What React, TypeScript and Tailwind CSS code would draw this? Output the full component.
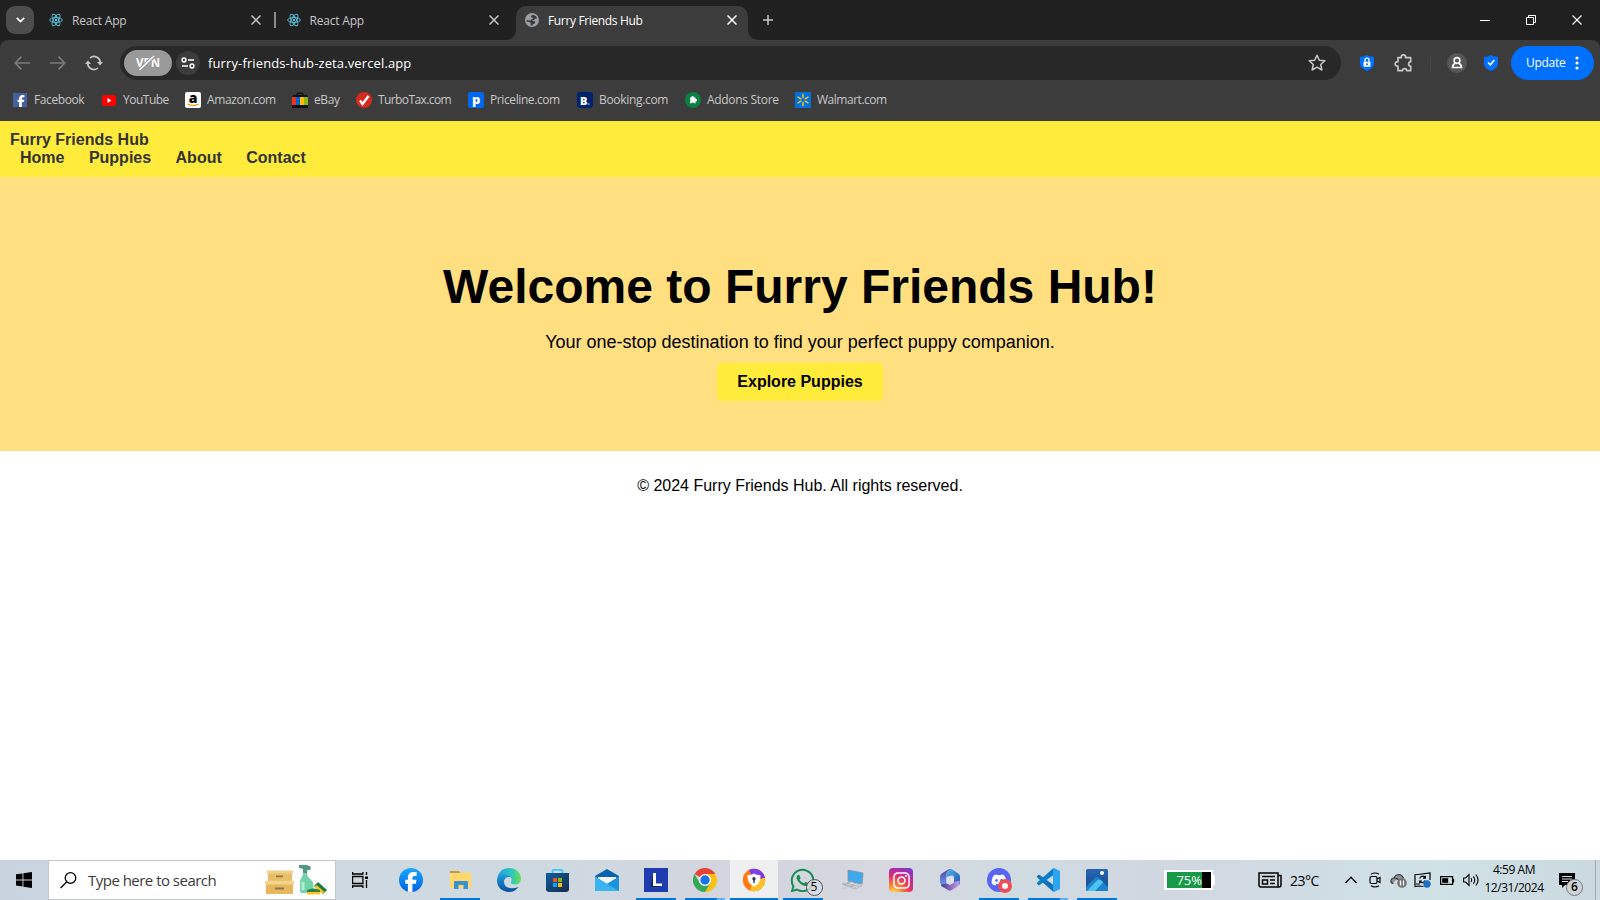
import React from "react";
import { FaDiscord, FaFacebookF, FaInstagram, FaWhatsapp } from "react-icons/fa6";

const ReactLogo = () => (
  <svg width="14" height="14" viewBox="0 0 14 14" fill="none" stroke="#58c4dc" strokeWidth="0.9">
    <circle cx="7" cy="7" r="1.2" fill="#58c4dc" stroke="none" />
    <ellipse cx="7" cy="7" rx="6.4" ry="2.5" />
    <ellipse cx="7" cy="7" rx="6.4" ry="2.5" transform="rotate(60 7 7)" />
    <ellipse cx="7" cy="7" rx="6.4" ry="2.5" transform="rotate(120 7 7)" />
  </svg>
);

const Cross = ({ color, size = 10, width = 1.5 }: { color: string; size?: number; width?: number }) => (
  <svg width={size} height={size} viewBox="0 0 10 10" stroke={color} strokeWidth={width}>
    <path d="M.5 .5 9.5 9.5M9.5 .5 .5 9.5" />
  </svg>
);

const Globe = () => (
  <svg width="14" height="14" viewBox="0 0 14 14">
    <circle cx="7" cy="7" r="7" fill="#9aa0a6" />
    <path d="M8.500 1.800 6.300 2.500 5.800 4l1.900.5.200 1.200-1.500.6L5.500 7.500l-4-.4.3 1.600 2.700.2 1.200 1-.1 2.400 1.700.1 1.100-1.500 1.300-.3.600-1.500-1.100-1-1.800-.1.300-.9 1.500-.2.800-1.200 2-.2-.8-2z" fill="#3c3c3c" />
  </svg>
);

function TabStrip() {
  return (
    <div className="flex h-10 items-center bg-[#202020] text-[12px] text-[#c7c7c7]">
      <div className="ml-1.5 flex h-7 w-7 items-center justify-center rounded-[9px] bg-[#4d4d4d]">
        <svg width="9" height="6" viewBox="0 0 9 6" fill="none" stroke="#fff" strokeWidth="1.8"><path d="M.8.9 4.5 4.600 8.200.9" /></svg>
      </div>
      <div className="flex w-[242px] items-center pl-[15px]">
        <ReactLogo />
        <span className="ml-[9px] w-[179px] pt-0.5 tracking-[-0.2px]">React App</span>
        <Cross color="#c7c7c7" />
      </div>
      <div className="-ml-0.5 h-4 w-[1.5px] bg-[#8a8a8a]" />
      <div className="flex w-[240px] items-center pl-[11px]">
        <ReactLogo />
        <span className="ml-[9px] w-[179px] pt-0.5 tracking-[-0.2px]">React App</span>
        <Cross color="#c7c7c7" />
      </div>
      <div className="-ml-[10px] flex h-full w-[252px] items-end">
        <svg className="shrink-0" width="10" height="10"><path d="M10 0v10H0A10 10 0 0 0 10 0z" fill="#3c3c3c" /></svg>
        <div className="flex h-[34px] w-[232px] items-center rounded-t-[10px] bg-[#3c3c3c] pb-[6px] pl-[9px] text-white">
          <Globe />
          <span className="ml-[9.500px] w-[178.500px] pt-0.5 tracking-[-0.35px]">Furry Friends Hub</span>
          <Cross color="#fff" />
        </div>
        <svg className="shrink-0" width="10" height="10"><path d="M0 0v10h10A10 10 0 0 1 0 0z" fill="#3c3c3c" /></svg>
      </div>
      <svg className="ml-[5px]" width="10" height="10" stroke="#c7c7c7" strokeWidth="1.5"><path d="M5 0v10M0 5h10" /></svg>
      <div className="ml-auto flex items-center">
        <div className="flex w-[46px] justify-center"><div className="h-px w-[10px] bg-white" /></div>
        <div className="flex w-[46px] justify-center">
          <svg width="10" height="10" fill="none" stroke="#fff"><path d="M.5 2.500h7v7h-7zM2.500 2.500v-2h7v7h-2" /></svg>
        </div>
        <div className="flex w-[46px] justify-center"><Cross color="#fff" size={10} width={1.1} /></div>
      </div>
    </div>
  );
}

const Shield = ({ children }: { children: React.ReactNode }) => (
  <svg width="14" height="16" viewBox="0 0 14 16">
    <path d="M7 0c2 1.300 4.300 1.800 7 1.800v6c0 4-2.700 6.700-7 8.200C2.700 14.500 0 11.800 0 7.800v-6C2.700 1.800 5 1.300 7 0z" fill="#0070ff" />
    {children}
  </svg>
);

function Toolbar() {
  return (
    <div className="flex h-[46px] items-center">
      <svg className="ml-[14px]" width="16" height="14" fill="none" stroke="#7b7b7b" strokeWidth="1.600"><path d="M16 7H1.200M7.500.6 1.200 7l6.300 6.400" /></svg>
      <svg className="ml-5" width="16" height="14" fill="none" stroke="#7b7b7b" strokeWidth="1.600"><path d="M0 7h14.800M8.500.6 14.800 7l-6.300 6.400" /></svg>
      <svg className="ml-[19px]" width="18" height="16" viewBox="0 0 18 16" fill="none" stroke="#c7c7c7" strokeWidth="1.600">
        <path d="M5 3A6.200 6.200 0 0 1 15.200 8.500M13 13A6.200 6.200 0 0 1 2.800 7.500" />
        <path d="M12 7h6l-3 3.600zM0 9h6L3 5.400z" fill="#c7c7c7" stroke="none" />
      </svg>
      <div className="ml-[17px] flex h-[34px] w-[1221px] items-center rounded-full bg-[#282828] pl-1">
        <div className="flex h-[26px] w-12 items-center justify-center rounded-full bg-[#999]">
          <svg width="26" height="16" viewBox="0 0 26 16">
            <text x="1" y="12.300" fill="#fff" fontFamily="Open Sans, sans-serif" fontWeight="700" fontSize="11.500" textLength="24">VPN</text>
            <path d="M5.500 15 19 1" stroke="#999" strokeWidth="4" />
            <path d="M4.500 15 19 1" stroke="#fff" strokeWidth="1.500" />
          </svg>
        </div>
        <div className="ml-1 flex h-6 w-6 items-center justify-center rounded-full bg-[#3c3c3c]">
          <svg width="14" height="12" fill="none" stroke="#fff" strokeWidth="1.500"><circle cx="3" cy="3" r="1.900" /><path d="M7 3h6M1 9h6" /><circle cx="11" cy="9" r="1.900" /></svg>
        </div>
        <span className="ml-2 pt-0.5 text-[13px] tracking-[0.12px] text-white">furry-friends-hub-zeta.vercel.app</span>
        <svg className="ml-auto mr-[15px]" width="18" height="18" viewBox="0 0 18 18" fill="none" stroke="#c7c7c7" strokeWidth="1.500" strokeLinejoin="round"><path d="m9 1.200 2.300 5 5.500.6-4.100 3.700 1.200 5.500L9 13.200 4.100 16l1.200-5.500L1.200 6.800l5.500-.6z" /></svg>
      </div>
      <div className="ml-[19px]"><Shield>
        <rect x="3.500" y="6.800" width="7" height="5" rx=".8" fill="#fff" />
        <path d="M5 7V5.200a2 2 0 0 1 4 0V7" fill="none" stroke="#fff" strokeWidth="1.300" />
        <circle cx="7" cy="9.300" r="1" fill="#0070ff" />
      </Shield></div>
      <svg className="ml-5" width="19" height="19" viewBox="0 0 19 19" fill="none" stroke="#c7c7c7" strokeWidth="1.700" strokeLinejoin="round">
        <path d="M4 3.700h3.300a2.200 2.200 0 1 1 4.200 0h5.200v4.100a2.100 2.100 0 0 0 0 4.200v4.700h-4a2.100 2.100 0 0 0-4.200 0H4V12a2.200 2.200 0 1 1 0-4.200z" />
      </svg>
      <div className="ml-[17px] h-4 w-px bg-[#454545]" />
      <div className="ml-4 flex h-5 w-5 items-center justify-center rounded-full bg-[#575757]">
        <svg width="12" height="14" fill="none" stroke="#fff" strokeWidth="1.600"><circle cx="6" cy="4.500" r="2.900" /><path d="M4 7.500C2 8.300 1.500 9.500 1.500 11.500h9c0-2-.5-3.200-2.500-4" /></svg>
      </div>
      <div className="ml-[17px]"><Shield><path d="m4 7.500 2.300 2.300L10.300 5" fill="none" stroke="#fff" strokeWidth="1.500" /></Shield></div>
      <div className="ml-[13px] flex h-[34px] w-[83px] items-center rounded-full bg-[#0070ff] pl-[15px] text-[12px] tracking-[-0.3px] text-white">
        <span className="w-[49px]">Update</span>
        <svg width="4" height="14" fill="#fff"><circle cx="2" cy="2" r="1.600" /><circle cx="2" cy="7" r="1.600" /><circle cx="2" cy="12" r="1.600" /></svg>
      </div>
    </div>
  );
}

function Bookmarks() {
  return (
    <div className="flex h-[35px] items-center pb-[7px] pl-[13px] text-[12px] tracking-[-0.4px] text-[#c7c7c7]">
      <div className="flex w-[89px] items-center gap-[7px]">
        <div className="flex h-3.5 w-3.5 items-end justify-end bg-[#4460a0]"><FaFacebookF size={12} color="#fff" /></div>
        <span>Facebook</span>
      </div>
      <div className="flex w-[83px] items-center gap-[7px]">
        <svg width="14" height="11"><rect width="14" height="11" rx="2.500" fill="#f00" /><path d="M5.500 3v5l4-2.500z" fill="#fff" /></svg>
        <span className="tracking-[-0.5px]">YouTube</span>
      </div>
      <div className="flex w-[107px] items-center gap-1.5">
        <div className="flex h-4 w-4 flex-col items-center rounded-[2px] bg-white">
          <span className="font-['Open_Sans',sans-serif] text-[14px] font-extrabold leading-[11px] tracking-normal text-black">a</span>
          <svg width="16" height="4"><path d="M2.500 1c3.500 2 7.500 2 11 .2" fill="none" stroke="#f90" strokeWidth="1.400" /></svg>
        </div>
        <span>Amazon.com</span>
      </div>
      <div className="flex w-16 items-center gap-1.5">
        <svg width="16" height="16">
          <path d="M5 5V2.500Q5 1 8 1t3 1.500V5" fill="none" stroke="#111" strokeWidth="1.300" />
          <path d="M1 3h14l1 2.500H0zM0 13h16v3H0z" fill="#111" />
          <path d="M0 5h4v8H0z" fill="#e32" /><path d="M4 5h4v8H4z" fill="#06c" /><path d="M8 5h4v8H8z" fill="#fb0" /><path d="M12 5h4v8h-4z" fill="#8b1" />
        </svg>
        <span>eBay</span>
      </div>
      <div className="flex w-[112px] items-center gap-1.5">
        <svg width="16" height="16"><circle cx="8" cy="8" r="8" fill="#d52b1e" /><path d="m4 8.500 2.500 3.500L12.500 4" fill="none" stroke="#fff" strokeWidth="2.300" /></svg>
        <span className="tracking-[-0.6px]">TurboTax.com</span>
      </div>
      <div className="flex w-[109px] items-center gap-1.5">
        <div className="flex h-4 w-4 items-center justify-center rounded-[2px] bg-[#0068ef] pb-0.5 text-[13px] font-extrabold leading-none text-white">p</div>
        <span>Priceline.com</span>
      </div>
      <div className="flex w-[108px] items-center gap-1.5">
        <div className="flex h-4 w-4 items-center justify-center rounded-[3px] bg-[#00246b] text-[11px] font-extrabold leading-none text-white">B<span className="text-[#1da1f2]">.</span></div>
        <span className="tracking-[-0.32px]">Booking.com</span>
      </div>
      <div className="flex w-[110px] items-center gap-1.5">
        <svg width="16" height="16"><circle cx="8" cy="8" r="8" fill="#0b8043" /><path d="M5 5.500h1.500a1.200 1.200 0 1 1 2.300 0h1.700v1.700a1.200 1.200 0 1 1 0 2.300v1.800H9a1.200 1.200 0 0 0-2.300 0H5V9.200a1.200 1.200 0 0 0 0-2z" fill="#fff" /></svg>
        <span className="tracking-[-0.3px]">Addons Store</span>
      </div>
      <div className="flex w-[100px] items-center gap-1.5">
        <svg width="16" height="16"><path d="M0 0h16v16H0z" fill="#0071dc" /><path d="M8 2.500v3M8 10.500v3M3 5.200l2.900 1.600M10.100 9.200l2.900 1.600M3 10.800l2.900-1.600M10.100 6.800 13 5.200" stroke="#ffc220" strokeWidth="1.500" strokeLinecap="round" /></svg>
        <span className="tracking-[-0.48px]">Walmart.com</span>
      </div>
    </div>
  );
}

function Page() {
  return (
    <div className="flex h-[739px] flex-col bg-white font-['Liberation_Sans',Arial,sans-serif] text-base leading-[18px] text-black">
      <nav className="h-14 bg-[#ffeb3b] p-2.5 font-bold text-[#333]">
        <div>Furry Friends Hub</div>
        <ul className="flex gap-[24.450px] pl-2.5">
          <li>Home</li>
          <li>Puppies</li>
          <li>About</li>
          <li>Contact</li>
        </ul>
      </nav>
      <section className="flex h-[274px] flex-col items-center bg-[#ffdf80] pt-[82px]">
        <h1 className="text-[48px] font-bold leading-[55px]">Welcome to Furry Friends Hub!</h1>
        <p className="mt-[18px] text-[18px] leading-[21px]">Your one-stop destination to find your perfect puppy companion.</p>
        <button className="mt-[10px] h-[38px] rounded-[5px] bg-[#ffeb3b] px-5 font-bold">Explore Puppies</button>
      </section>
      <footer className="pt-[26px] text-center">© 2024 Furry Friends Hub. All rights reserved.</footer>
    </div>
  );
}

type AppEntry = { name: string; icon: React.ReactNode; state?: "open" | "active" | "multi" };

const apps: AppEntry[] = [
  { name: "facebook", icon: (
    <div className="flex h-6 w-6 items-end justify-center overflow-hidden rounded-full bg-[linear-gradient(#19aaff,#0062e0)]"><FaFacebookF size={20} color="#fff" /></div>
  ) },
  { name: "explorer", state: "open", icon: (
    <svg width="24" height="24"><path d="M2 3h9l1.500 2H2z" fill="#d9960f" /><path d="M2 6h9l1.500-1.500H22Q23 4.500 23 5.500V20H2z" fill="#ffd76b" /><path d="M6 21v-7q0-1 1-1h12q1 0 1 1v7h-4.500v-4h-5v4z" fill="#3a92d4" /></svg>
  ) },
  { name: "edge", icon: (
    <svg width="24" height="24">
      <defs>
        <linearGradient id="edgeTop"><stop stopColor="#1a9fe0" /><stop offset=".6" stopColor="#2fc6c0" /><stop offset="1" stopColor="#6be04e" /></linearGradient>
        <linearGradient id="edgeLow" x2="0" y2="1"><stop stopColor="#1b9de2" /><stop offset="1" stopColor="#0d4f9f" /></linearGradient>
      </defs>
      <path d="M.3 10C1.500 4 6 0 12 0c7 0 12 5 12 10.500 0 4-3 6-6 6s-5-1.200-4-2.700c2-3.500-1-6.300-5-6.300-5 0-8 3-8.700 6z" fill="url(#edgeTop)" />
      <path d="M0 12.500C.5 8.500 4 6.500 8 6.500c3 0 5 1.200 6 3-4-1.500-7 1-7 4.500 0 5 6 8 14.500 5-2 3-5.500 5-9.500 5C5 24 0 19 0 12.500z" fill="url(#edgeLow)" />
    </svg>
  ) },
  { name: "store", icon: (
    <svg width="24" height="24"><defs><linearGradient id="store" x2="1" y2="1"><stop stopColor="#0d5e9e" /><stop offset="1" stopColor="#1b2c4c" /></linearGradient></defs><path d="M6.500 6V3q0-1.200 1.200-1.200h7.600Q16.500 1.800 16.500 3v3" fill="none" stroke="#3cc8f4" strokeWidth="1.700" /><path d="M0 5h23v16q0 3-3 3H3q-3 0-3-3z" fill="url(#store)" /><path d="M7 10h4v4H7z" fill="#f35325" /><path d="M12 10h4v4h-4z" fill="#81bc06" /><path d="M7 15h4v4H7z" fill="#05a6f0" /><path d="M12 15h4v4h-4z" fill="#ffba08" /></svg>
  ) },
  { name: "mail", icon: (
    <svg width="24" height="24"><path d="M0 8 12 1l12 7v4H0z" fill="#0b62b0" /><path d="M3 9h18v7H3z" fill="#f2f4f6" /><path d="M0 8.500 12 16l12-7.500V23H0z" fill="#35b8f1" /><path d="M0 8.500 24 23H0z" fill="#3ab4ee" /><path d="M12 16 24 8.500V23z" fill="#1c93dc" /></svg>
  ) },
  { name: "l-app", state: "open", icon: (
    <svg width="24" height="24"><path d="M0 0h24v24H0z" fill="#1e3cae" /><path d="m7 19 2-14v13l9 1z" fill="#0b2b30" /><path d="M9 5h3v10.500h6V18H9z" fill="#fff" /></svg>
  ) },
  { name: "chrome", state: "multi", icon: (
    <svg width="24" height="24"><path d="M12 12 1.600 6A12 12 0 0 1 22.400 6z" fill="#ea4335" /><path d="M12 12V6h10.400A12 12 0 0 1 12 24z" fill="#fbc116" /><path d="M12 24A12 12 0 0 1 1.600 6l5.200 9L12 18l5.200-3z" fill="#34a853" /><circle cx="12" cy="12" r="6" fill="#fff" /><circle cx="12" cy="12" r="4.700" fill="#1a73e8" /></svg>
  ) },
  { name: "secure-browser", state: "active", icon: (
    <svg width="24" height="24"><circle cx="12" cy="12" r="11.200" fill="#ff7a12" /><path d="M7 2A11.200 11.200 0 0 1 23 10L12 12z" fill="#7c3bf0" /><path d="M23 10A11.200 11.200 0 0 1 8 22.400L12 12z" fill="#ffc32a" /><path d="M12 5.500c2 1.300 3.800 1.700 6.500 1.700 0 5.500-1.500 9-6.500 11.300-5-2.300-6.500-5.800-6.500-11.300 2.700 0 4.500-.4 6.500-1.700z" fill="#fff" /><circle cx="12" cy="10.700" r="1.700" fill="#335" /><path d="M11.300 11h1.400v4h-1.400z" fill="#335" /></svg>
  ) },
  { name: "whatsapp", state: "open", icon: (
    <div className="relative -ml-0.5"><FaWhatsapp size={27} color="#168c4f" /><span className="absolute left-[17px] top-[12px] flex h-[17px] w-[17px] items-center justify-center rounded-full border border-[#555] bg-[#d8dce2]/80 text-[12px] leading-none text-black">5</span></div>
  ) },
  { name: "computer", icon: (
    <svg width="24" height="24"><path d="m8 2 15 3-1 11-14-3z" fill="#3fa9ec" stroke="#7e93a2" strokeWidth=".8" /><path d="m2 16 9-2 11 4-7 3z" fill="#dfe3e6" stroke="#a7adb2" strokeWidth=".7" /><path d="m4 16.500 12 3M7 15.500l12 3M10 14.500 5 17M15 16l-5 2.500" stroke="#8e969c" strokeWidth=".6" /><path d="m1 20 3-1 3 1.500-3 1z" fill="#c5cacd" /></svg>
  ) },
  { name: "instagram", icon: (
    <div className="flex h-6 w-6 items-center justify-center rounded-[4px] bg-[radial-gradient(circle_at_20%_105%,#ffd25a_5%,#f77737_30%,#e1306c_55%,#a02bb8_80%,#5b51d8)]"><FaInstagram size={19} color="#fff" /></div>
  ) },
  { name: "microsoft-365", icon: (
    <svg width="24" height="24">
      <defs>
        <linearGradient id="m1" x2="0" y2="1"><stop stopColor="#54409f" /><stop offset="1" stopColor="#6f9df0" /></linearGradient>
        <linearGradient id="m2" x2="1" y2="1"><stop stopColor="#4fb4f0" /><stop offset="1" stopColor="#2450ae" /></linearGradient>
        <linearGradient id="m3"><stop stopColor="#433a94" /><stop offset="1" stopColor="#c79bea" /></linearGradient>
      </defs>
      <path d="M14 1 9.500 3.500Q8.500 4.200 8.500 6v9.500L5 17.500q-3-1-3-4V8.500Q2 6.500 4 5.300L9.500 2Q11.500.8 14 1z" fill="url(#m1)" />
      <path d="M9.500 3.500Q12 0 15 2l5 3.300q2 1.200 2 3.200V15q-.5 2-2 2.500L16 15V9.500Q16 8 14.500 7.300L8.500 9V6q0-1.500 1-2.500z" fill="url(#m2)" />
      <path d="m3 16.500 5.500-1L12 17l4-2.500V14l5.500-1.500v3q0 1.500-1.500 2.500l-6 4q-2 1.200-4 0l-6-3.500q-1-.7-1-2z" fill="url(#m3)" />
      <path d="m12 8 3.800 2.200v4L12 16.300l-3.600-2v-4.200z" fill="#dbe3ea" />
    </svg>
  ) },
  { name: "discord", state: "open", icon: (
    <div className="relative flex h-6 w-6 items-center justify-center rounded-full bg-[#5865f2]"><FaDiscord size={16} color="#fff" /><span className="absolute left-[11px] top-[11px] flex h-3.5 w-3.5 items-center justify-center rounded-full bg-[#ed4f55]"><i className="h-1.5 w-1.5 rounded-full bg-white" /></span></div>
  ) },
  { name: "vscode", state: "multi", icon: (
    <svg width="24" height="24"><path d="m17.500 24-16-14.200q-1-.9-.3-1.700l1-1q.7-.5 1.500 0L17.500 17z" fill="#0f72b8" /><path d="m17.500 0-16 14.200q-1 .9-.3 1.700l1 1q.7.5 1.500 0L17.500 7z" fill="#0a7fc9" /><path d="M17 0h1l6 3v18l-6 3h-1z" fill="#2aa5ee" /></svg>
  ) },
  { name: "photos", state: "open", icon: (
    <svg width="24" height="24"><defs><linearGradient id="photo" x2="0" y2="1"><stop stopColor="#2566b4" /><stop offset="1" stopColor="#174a86" /></linearGradient></defs><rect x="1" y="1" width="22" height="22" rx="1.500" fill="url(#photo)" /><path d="m1 19 9.500-9.500q1.500-1.200 3 0L23 19v4H1z" fill="#1b83cc" /><path d="m2 23 10.500-11q1.500-1 3 0l2.500 2.500L10 23z" fill="#4cc5ee" /><circle cx="17" cy="5" r="2" fill="#fff" /></svg>
  ) },
];

function TaskbarApp({ app }: { app: AppEntry }) {
  const active = app.state === "active";
  return (
    <div className="flex h-10 w-[49px] justify-center">
      <div className={active ? "flex w-12 flex-col items-center bg-[#eeeff1]" : "flex w-10 flex-col items-center"}>
        <div className="flex h-[38px] items-center pt-0.5">{app.icon}</div>
        {app.state && (
          <div className="flex h-0.5 w-full bg-[#0078d7]">
            {app.state === "multi" && <div className="ml-auto w-2 bg-[#66aee6]" />}
          </div>
        )}
      </div>
    </div>
  );
}

function Tray() {
  return (
    <div className="ml-auto flex h-10 items-center text-black">
      <div className="flex h-5 w-[49px] items-center border-2 border-white bg-black">
        <div className="flex h-4 w-9 items-center justify-end border-l border-white bg-[#169a47] text-[13px] leading-none text-white">75%</div>
      </div>
      <div className="h-2.5 w-0.5 bg-white" />
      <svg className="ml-[43px]" width="24" height="16" fill="none" stroke="#000" strokeWidth="1.500"><path d="M1 1h19v14H3q-2 0-2-2zM20 3.500h3V13q0 2-2 2h-2M4 4.500h13M12 8h5M12 11.500h5" /><path d="M4.500 8h5v4h-5z" /></svg>
      <span className="ml-2 w-[31px] text-[14px] tracking-[-0.5px]">23°C</span>
      <svg className="ml-[24px]" width="12" height="8" fill="none" stroke="#000" strokeWidth="1.300"><path d="M.5 7 6 1.300 11.500 7" /></svg>
      <svg className="ml-[12px]" width="12" height="16" fill="none" stroke="#000" strokeWidth="1.200"><rect x="1" y="4.500" width="7" height="7" rx="1.500" /><path d="m8 7 3-1.500v5L8 9M2 2.200Q6-.2 10 2.200M2 13.800q4 2.400 8 0" /></svg>
      <svg className="ml-[9px]" width="17" height="15"><path d="M3.500 10.500q-3-.5-2.500-3Q1.500 5 4 5 5.500 1.500 9 1.500q3 .3 4.500 3.500 2 .5 2 2.500v3z" fill="#8d9496" /><path d="M3.500 10.500q-3-.5-2.500-3Q1.500 5 4 5 5.500 1.500 9 1.500q3 .3 4.500 3.500M4.500 5q3 0 4 2" fill="none" stroke="#3c3c3c" strokeWidth="1.200" /><path d="M3.500 10.500Q4 6.800 8 7v3.500z" fill="#d7dcdd" /><circle cx="12" cy="10" r="4.800" fill="#747474" /><path d="M10.500 7.500v5M13.500 7.500v5" stroke="#fff" strokeWidth="1.300" /></svg>
      <svg className="ml-[7px]" width="17" height="16" fill="none" stroke="#000" strokeWidth="1.200"><path d="M9.500 14.500 4.500 14 1 14.500V2.500h3L16 1v7M2 12h4" /><path d="M5.800 6.500A2.800 2.800 0 0 1 10.500 5l.7.900M11.300 3.800v2.300H9M11 8.500A2.800 2.800 0 0 1 6.500 10l-.7-.8M5.700 11.300V9H8" /><circle cx="13" cy="12" r="3.700" fill="#1b6ec2" stroke="none" /></svg>
      <svg className="ml-[9px]" width="15" height="9"><path d="M.6.6h12v7.800H.6zM13.500 3v3.500" fill="none" stroke="#000" strokeWidth="1.300" /><path d="M2.200 2.200h6v4.600h-6z" /></svg>
      <svg className="ml-2" width="17" height="14" fill="none" stroke="#000" strokeWidth="1.100"><path d="M.6 5h2L6 1.500v11L2.600 9h-2zM8 5q1.500 2 0 4" /><path d="M10.300 3.300q3 3.700 0 7.400" /><path d="M12.800 1.500q4.600 5.500 0 11" /></svg>
      <div className="ml-[3px] flex w-[62px] flex-col items-center pb-0.5 text-[12px] leading-[18px] tracking-[-0.45px]">
        <span>4:59 AM</span>
        <span>12/31/2024</span>
      </div>
      <div className="relative ml-[14px] w-9">
        <svg width="16" height="15"><path d="M0 0h16v12H6l-3 3v-3H0z" /><path d="M3 3.500h10M3 6h10M3 8.500h6" stroke="#d5dfe5" strokeWidth="1.200" /></svg>
        <span className="absolute left-[7px] top-[6px] flex h-[17px] w-[17px] items-center justify-center rounded-full border border-[#777] bg-[#d0d4d7] text-[12px] font-semibold leading-none">6</span>
      </div>
      <div className="mr-1 h-10 w-px bg-[#9fadb5]" />
    </div>
  );
}

function Taskbar() {
  return (
    <div className="flex h-10 items-center bg-[linear-gradient(90deg,#c9d3df_0%,#ced9e1_22%,#cfd9e1_35%,#d3d5df_45%,#d6d8df_55%,#d0dbe2_64%,#d1d7e1_72%,#d0dce4_82%,#cfe2e6_90%,#cbd8e0_100%)]">
      <svg className="ml-4" width="16" height="16"><path d="M0 2.300 6.500 1.400v6H0zM7.400 1.200 16 0v7.400H7.400zM0 8.400h6.500v6L0 13.600zM7.400 8.400H16V16l-8.600-1.200z" /></svg>
      <div className="ml-4 flex h-10 w-[288px] items-center border border-[#c4c6c8] bg-white pl-[11px]">
        <svg width="17" height="17" fill="none" stroke="#000" strokeWidth="1.300"><circle cx="10.500" cy="6" r="5.300" /><path d="M6.800 9.800.6 16" /></svg>
        <span className="ml-[11px] w-[177px] text-[15px] tracking-[-0.52px] text-[#3b3b3b]">Type here to search</span>
        <svg width="64" height="32" viewBox="0 0 64 32">
          <path d="M3 8h24v10H3z" fill="#e9bf6c" /><path d="M2 6.500h26V9.500H2z" fill="#f2cf86" /><path d="M1 19h27v11H1z" fill="#e7b75f" /><path d="M0 17h29v3.500H0z" fill="#f4d48f" /><path d="M11 11.500h7v1.700h-7zM10 23.500h9v2h-9z" fill="#8e7448" />
          <path d="M34 1h8l4 2-1 3h-3v3h-4V5l-4-1z" fill="#4f9a7c" /><path d="M38 9h4c0 5 6 6 6.500 12v6q0 2-2 2H37q-2 0-2-2V18c0-4 3-5 3-9z" fill="#72d3aa" /><path d="M38 18v8" stroke="#b4ecd6" strokeWidth="3" /><path d="m53 18 9 8-4 4-9-8z" fill="#1e7a3e" /><path d="m51.500 21 8 7-2 2-8-7z" fill="#f5c324" /><path d="M42 26q6-3 13 0v3H42z" fill="#2d8040" /><path d="M42 28h13v2.500H42z" fill="#f9c62a" />
        </svg>
      </div>
      <svg className="ml-4" width="17" height="16" fill="none" stroke="#000" strokeWidth="1.300"><path d="M.6 4.500h10.300v7H.6zM.6 0v2h10.300V0M.6 16v-2h10.300v2M14.500 0v3M14.500 8v8" /><path d="M13 4.500h3V7h-3z" fill="#000" stroke="none" /></svg>
      <div className="ml-[17.500px] flex">
        {apps.map((app) => <TaskbarApp key={app.name} app={app} />)}
      </div>
      <Tray />
    </div>
  );
}

export default function App() {
  return (
    <div className="h-[900px] w-[1600px] overflow-hidden font-['Open_Sans','Noto_Sans',sans-serif]">
      <TabStrip />
      <div className="bg-[#202020]">
        <div className="rounded-t-[8px] bg-[#3c3c3c]">
          <Toolbar />
          <Bookmarks />
        </div>
      </div>
      <Page />
      <Taskbar />
    </div>
  );
}
